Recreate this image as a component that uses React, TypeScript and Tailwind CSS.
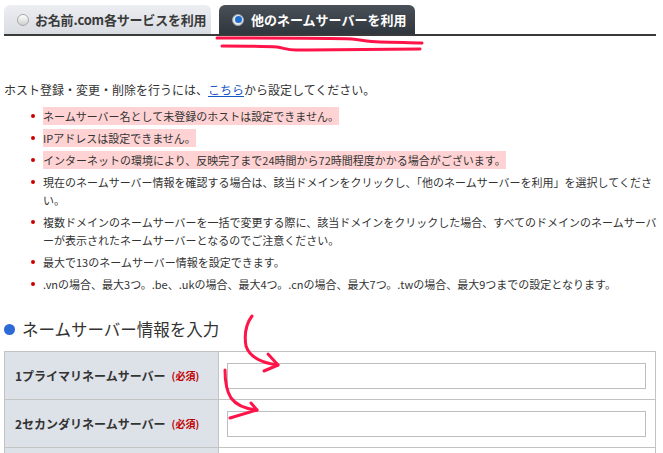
const NOTES = [
  { text: "ネームサーバー名として未登録のホストは設定できません。", warn: true },
  { text: "IPアドレスは設定できません。", warn: true },
  {
    text: "インターネットの環境により、反映完了まで24時間から72時間程度かかる場合がございます。",
    warn: true,
  },
  {
    text: "現在のネームサーバー情報を確認する場合は、該当ドメインをクリックし、「他のネームサーバーを利用」を選択してくださ\nい。",
  },
  {
    text: "複数ドメインのネームサーバーを一括で変更する際に、該当ドメインをクリックした場合、すべてのドメインのネームサーバ\nーが表示されたネームサーバーとなるのでご注意ください。",
  },
  { text: "最大で13のネームサーバー情報を設定できます。" },
  {
    text: ".vnの場合、最大3つ。.be、.ukの場合、最大4つ。.cnの場合、最大7つ。.twの場合、最大9つまでの設定となります。",
  },
];

// third row is only cut in at the bottom edge
const ROWS = [
  { label: "1プライマリネームサーバー", required: true },
  { label: "2セカンダリネームサーバー", required: true },
  { label: "", required: false },
];

export default function App() {
  return (
    <div className="relative h-[453px] w-[663px] overflow-hidden bg-white font-['Noto_Sans_CJK_JP','Noto_Sans',sans-serif] text-[#333]">
      {/* tabs */}
      <div className="mx-[4px] mt-[5px] flex h-[31px] w-[652px] items-end gap-[8px] border-b-2 border-[#3a3a3a]">
        <div className="flex h-[29px] w-[207px] items-center whitespace-nowrap rounded-t-[6px] bg-gradient-to-b from-[#eceef2] to-[#d9dce2] pl-[13px]">
          <span className="h-[12px] w-[12px] shrink-0 rounded-full border border-[#a8a8a8] bg-gradient-to-b from-[#ffffff] to-[#d0d0d0]" />
          <span className="ml-[6px] text-[13px] font-bold leading-none tracking-[-0.2px] text-[#3a3a3a]">
            お名前.com各サービスを利用
          </span>
        </div>
        <div className="flex h-[29px] w-[196px] items-center whitespace-nowrap rounded-t-[6px] bg-gradient-to-b from-[#4a5058] to-[#30363d] pl-[13px]">
          <span className="flex h-[12px] w-[12px] shrink-0 items-center justify-center rounded-full border border-[#9aa0a6] bg-[#e8e8e8]">
            <span className="h-[7px] w-[7px] rounded-full bg-[#1d6fd0]" />
          </span>
          <span className="ml-[7px] text-[13px] font-bold leading-none text-white">
            他のネームサーバーを利用
          </span>
        </div>
      </div>

      <p className="ml-[4px] mt-[45px] text-[12px] leading-[18px]">
        ホスト登録・変更・削除を行うには、
        <span className="text-[#1a56c8] underline">こちら</span>
        から設定してください。
      </p>

      <ul className="mt-[8px] space-y-[4px] pl-[31px] text-[11px] leading-[18px]">
        {NOTES.map((n) => (
          <li key={n.text} className="flex">
            <span className="mr-[8px] mt-[7px] h-[4px] w-[4px] shrink-0 rounded-full bg-[#cc0000]" />
            <span className="whitespace-pre-line">
              {n.warn ? <span className="bg-[#ffd3d3] py-[1px]">{n.text}</span> : n.text}
            </span>
          </li>
        ))}
      </ul>

      <h2 className="ml-[4px] mt-[25px] flex items-center">
        <span className="h-[11px] w-[11px] rounded-full bg-[#2d6ad6]" />
        <span className="ml-[7px] text-[16.5px] leading-[22px]">ネームサーバー情報を入力</span>
      </h2>

      <div className="ml-[4px] mt-[11px] w-[652px] border-t border-l border-r border-[#c3c3c3]">
        {ROWS.map((row, i) => (
          <div key={i} className="grid h-[48px] grid-cols-[214px_1fr] border-b border-[#c3c3c3]">
            <div className="flex items-center border-r border-[#c3c3c3] bg-[#dde1e8] pl-[10px] text-[12px] font-bold">
              {row.label}
              {row.required && <span className="ml-[6px] text-[10px] text-[#c00000]">(必須)</span>}
            </div>
            <div className="flex items-center pl-[8px]">
              <input className="h-[26px] w-[419px] border border-[#bdbdbd] bg-white outline-none" />
            </div>
          </div>
        ))}
      </div>

      {/* hand-drawn red annotations */}
      <svg
        className="pointer-events-none absolute left-0 top-0"
        width="663"
        height="453"
        fill="none"
        stroke="#ff1449"
        strokeWidth="3"
        strokeLinecap="round"
        strokeLinejoin="round"
      >
        <path d="M217 38 C 280 38, 330 38, 352 39 C 362 40, 368 42, 380 42 C 395 42, 410 43, 422 43" />
        <path d="M222 46 C 245 46, 265 46, 277 47 C 284 48, 287 50, 296 50 C 340 50, 385 49, 420 49" />
        <path d="M252 316 C 246 324, 244 334, 246 346 C 250 358, 262 363, 278 365" />
        <path d="M268 354 L 278 365 L 264 371" />
        <path d="M225 370 C 225 380, 226 390, 231 398 C 237 406, 246 409, 257 410" />
        <path d="M251 403 L 257 410 L 230 418" />
      </svg>
    </div>
  );
}
